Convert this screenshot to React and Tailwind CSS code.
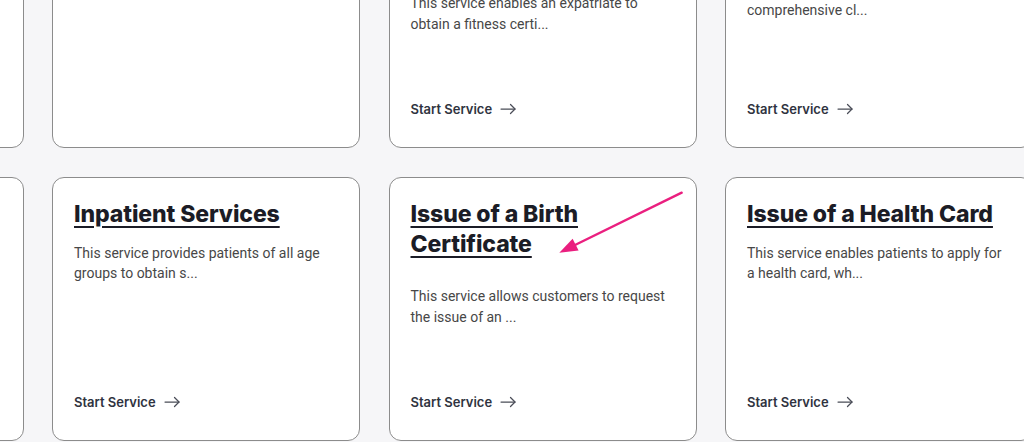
const TOP_ROW = [
  { title: 'Outpatient Clinics', desc: ['This service allows patients to book', 'clinic appointme...'], gap: 'normal', footer: false },
  { title: '', desc: ['', ''], gap: 'wide', footer: false },
  { title: 'Issue of a Fitness Certificate', desc: ['This service enables an expatriate to', 'obtain a fitness certi...'], gap: 'wide', footer: true },
  { title: 'Medical Report Request', desc: ['This service allows patients to obtain a', 'comprehensive cl...'], gap: 'normal', footer: true },
];

const BOTTOM_ROW = [
  { title: 'Laboratory Tests', desc: ['This service allows patients to view', 'their test res...'], gap: 'normal', footer: true },
  { title: 'Inpatient Services', desc: ['This service provides patients of all age', 'groups to obtain s...'], gap: 'normal', footer: true },
  { title: 'Issue of a Birth Certificate', desc: ['This service allows customers to request', 'the issue of an ...'], gap: 'wide', footer: true },
  { title: 'Issue of a Health Card', desc: ['This service enables patients to apply for', 'a health card, wh...'], gap: 'normal', footer: true },
];

function LongArrow() {
  return (
    <svg width="16" height="12" viewBox="0 0 16 12" fill="none" stroke="#4a4d57" strokeWidth="1.25" strokeLinecap="round" strokeLinejoin="round">
      <path d="M1 6H15" />
      <path d="M10.5 1.5L15 6L10.5 10.5" />
    </svg>
  );
}

function ServiceCard({ item }) {
  const wide = item.gap === 'wide';

  return (
    <div className="flex h-[264px] flex-col rounded-[12px] border border-[#8c8c8c] bg-white px-[21px] pt-[21px] pb-[28px]">
      <h3 className="font-['Inter',sans-serif] text-[23px] leading-[30px] font-extrabold tracking-[-0.1px] text-[#1b1c26] underline decoration-[2px] underline-offset-[4px]">
        {item.title}
      </h3>
      <p
        className={[
          "font-['Roboto',sans-serif] text-[14px] text-[#474747]",
          wide ? 'mt-[27px] leading-[21px]' : 'mt-[14px] leading-[20px]'
        ].join(' ')}
      >
        {item.desc[0]}
        <br />
        {item.desc[1]}
      </p>
      {item.footer ? (
        <a href="#" className="mt-auto flex items-center gap-[8px] font-['Inter',sans-serif] text-[13px] leading-[20px] font-semibold text-[#2f3340]">
          <span>Start Service</span>
          <LongArrow />
        </a>
      ) : null}
    </div>
  );
}

export default function App() {
  return (
    <div className="relative h-[442px] w-[1024px] overflow-hidden bg-[#f6f6f8]">
      <div className="-mt-[116px] -ml-[284.5px] grid grid-cols-[repeat(4,308px)] gap-x-[28.5px] gap-y-[29px]">
        {TOP_ROW.map((item, i) => (
          <ServiceCard key={'t' + i} item={item} />
        ))}
        {BOTTOM_ROW.map((item, i) => (
          <ServiceCard key={'b' + i} item={item} />
        ))}
      </div>

      <svg className="pointer-events-none absolute inset-0" width="1024" height="442" viewBox="0 0 1024 442">
        <line x1="681.7" y1="192.7" x2="573" y2="246" stroke="#ea1f7f" strokeWidth="2.4" strokeLinecap="round" />
        <polygon points="559.3,252.7 578.6,250.6 572.6,238.8" fill="#ea1f7f" />
      </svg>
    </div>
  );
}
